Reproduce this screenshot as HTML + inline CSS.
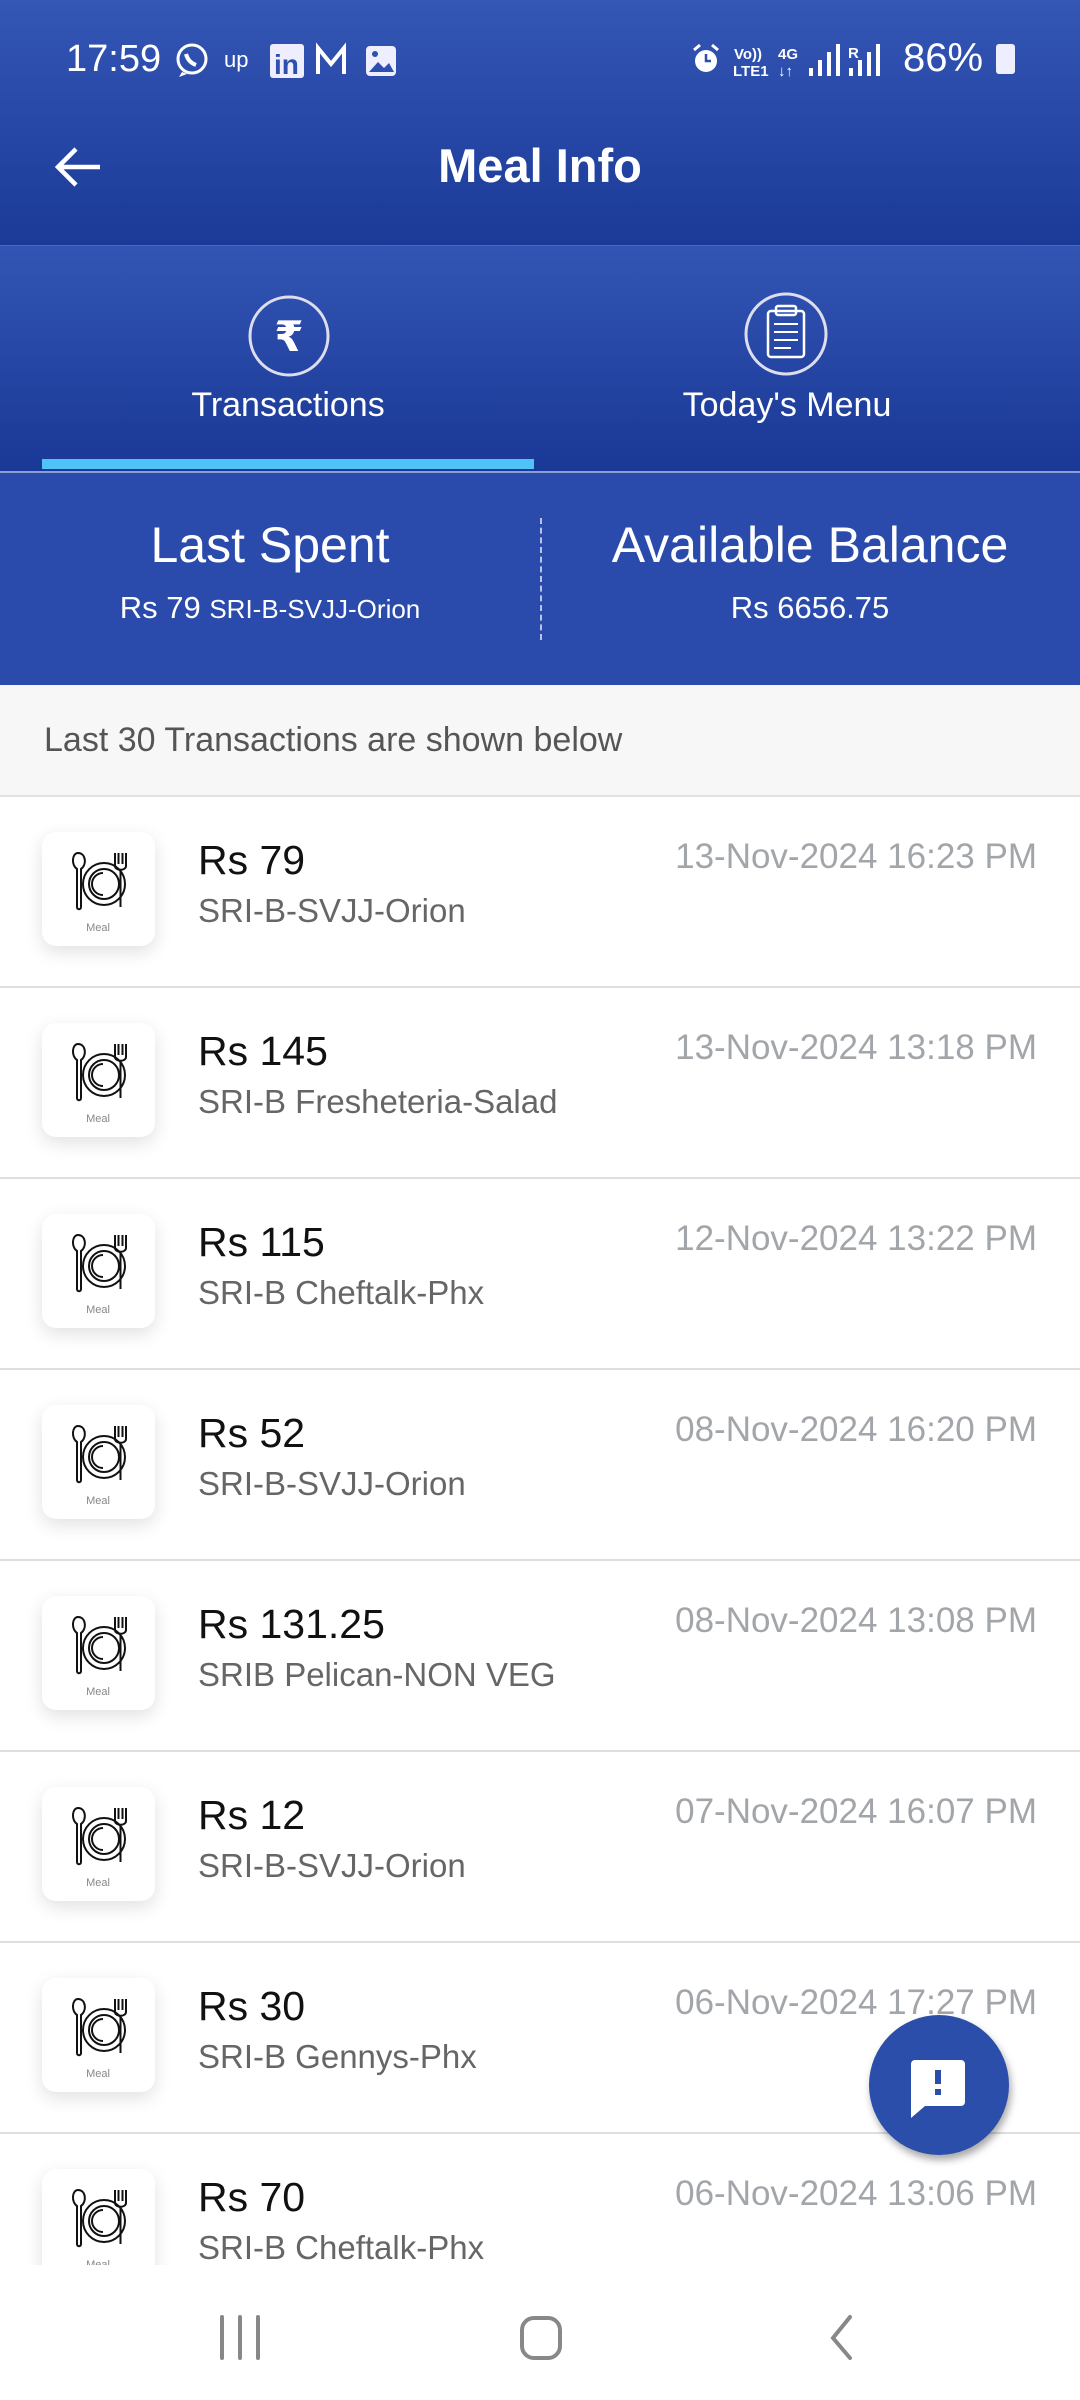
<!DOCTYPE html>
<html><head><meta charset="utf-8">
<style>
*{margin:0;padding:0;box-sizing:border-box}
body{width:1080px;height:2400px;overflow:hidden;background:#fff;font-family:"Liberation Sans",sans-serif;position:relative}
.hdr{position:absolute;left:0;top:0;width:1080px;height:245px;background:linear-gradient(#3456b5,#1b3a98)}
.tabs{position:absolute;left:0;top:245px;width:1080px;height:226px;background:linear-gradient(#3255b4,#1a3896);border-top:1px solid #4a66bf}
.bal{position:absolute;left:0;top:471px;width:1080px;height:214px;background:#2a4bab;border-top:2px solid #8a9ed8}
.abs{position:absolute}
.w{color:#fff}
.note{position:absolute;left:0;top:685px;width:1080px;height:112px;background:#f7f7f7;border-bottom:2px solid #e2e2e2;color:#555;font-size:34px;padding:36px 0 0 44px}
.row{position:absolute;left:0;width:1080px;height:191px;border-bottom:2px solid #dedede}
.card{position:absolute;left:42px;top:35px;width:113px;height:114px;background:#fff;border-radius:14px;box-shadow:0 6px 18px rgba(0,0,0,.12)}
.amt{position:absolute;left:198px;top:40px;font-size:41px;color:#111}
.plc{position:absolute;left:198px;top:95px;font-size:33px;color:#666}
.dt{position:absolute;right:43px;top:40px;font-size:35px;color:#a2a6aa}
</style></head><body>
<div class="hdr"></div>
<div class="abs w" style="left:66px;top:38px;font-size:38px">17:59</div>
<svg class="abs" style="left:174px;top:42px" width="230" height="36" viewBox="0 0 230 36">
<circle cx="18" cy="17" r="14" fill="none" stroke="#fff" stroke-width="3"/><path d="M8 30 L5 35 L13 32" fill="#fff"/><path d="M12 12 q2 8 10 11" stroke="#fff" stroke-width="4" fill="none"/>
<text x="50" y="25" fill="#fff" font-size="22" font-family="Liberation Sans">up</text>
<rect x="96" y="2" width="34" height="34" rx="3" fill="#eef"/><text x="100" y="32" fill="#2d4fae" font-size="28" font-weight="bold" font-family="Liberation Sans">in</text>
<path d="M144 32 V6 L157 22 L170 6 V32" stroke="#fff" stroke-width="4" fill="none"/>
<rect x="192" y="4" width="30" height="30" rx="4" fill="#eef"/><path d="M195 30 L204 20 L210 26 L215 21 L220 30Z" fill="#2d4fae"/><circle cx="201" cy="12" r="3" fill="#2d4fae"/>
</svg>
<svg class="abs" style="left:688px;top:42px" width="330" height="36" viewBox="0 0 330 36">
<circle cx="18" cy="19" r="11" fill="#fff"/><path d="M18 12 V19 H23" stroke="#2d4fae" stroke-width="2.5" fill="none"/><path d="M6 8 L12 3 M30 8 L24 3" stroke="#fff" stroke-width="3"/>
<text x="46" y="17" fill="#fff" font-size="15" font-weight="bold" font-family="Liberation Sans">Vo))</text><text x="45" y="34" fill="#fff" font-size="15" font-weight="bold" font-family="Liberation Sans">LTE1</text>
<text x="90" y="17" fill="#fff" font-size="15" font-weight="bold" font-family="Liberation Sans">4G</text><text x="90" y="34" fill="#fff" font-size="15" font-family="Liberation Sans">↓↑</text>
<rect x="121" y="26" width="4" height="8" fill="#fff"/><rect x="130" y="18" width="4" height="16" fill="#fff"/><rect x="139" y="10" width="4" height="24" fill="#fff"/><rect x="148" y="2" width="4" height="32" fill="#fff"/>
<text x="160" y="16" fill="#fff" font-size="15" font-weight="bold" font-family="Liberation Sans">R</text>
<rect x="161" y="26" width="4" height="8" fill="#fff"/><rect x="170" y="18" width="4" height="16" fill="#fff"/><rect x="179" y="10" width="4" height="24" fill="#fff"/><rect x="188" y="2" width="4" height="32" fill="#fff"/>
</svg>
<div class="abs w" style="left:903px;top:36px;font-size:40px">86%</div>
<div class="abs" style="left:996px;top:44px;width:19px;height:30px;background:#eef;border-radius:3px"></div>
<svg class="abs" style="left:54px;top:145px" width="50" height="44" viewBox="0 0 50 44"><path d="M46 22 H4 M22 4 L4 22 L22 40" stroke="#fff" stroke-width="4.5" fill="none"/></svg>
<div class="abs w" style="left:0;width:1080px;text-align:center;top:138px;font-size:47px;font-weight:bold">Meal Info</div>

<div class="tabs"></div>
<svg class="abs" style="left:247px;top:294px" width="84" height="84"><circle cx="42" cy="42" r="39" fill="none" stroke="#dde" stroke-width="3"/><text x="42" y="57" text-anchor="middle" fill="#fff" font-size="42" font-weight="bold" font-family="DejaVu Sans">₹</text></svg>
<svg class="abs" style="left:743px;top:291px" width="86" height="86"><circle cx="43" cy="43" r="40" fill="none" stroke="#dde" stroke-width="3"/><rect x="25" y="20" width="36" height="46" rx="3" fill="none" stroke="#fff" stroke-width="2.5"/><rect x="33" y="15" width="20" height="9" rx="2" fill="none" stroke="#fff" stroke-width="2.5"/><path d="M31 33 H55 M31 41 H55 M31 49 H55 M31 57 H48" stroke="#fff" stroke-width="2"/></svg>
<div class="abs w" style="left:0;width:576px;text-align:center;top:386px;font-size:34px">Transactions</div>
<div class="abs w" style="left:540px;width:494px;text-align:center;top:386px;font-size:34px">Today's Menu</div>
<div class="abs" style="left:42px;top:459px;width:492px;height:10px;background:#4fc3f7"></div>

<div class="bal"></div>
<div class="abs w" style="left:0;width:540px;text-align:center;top:516px;font-size:50px">Last Spent</div>
<div class="abs w" style="left:0;width:540px;text-align:center;top:590px;font-size:31px">Rs 79 <span style="font-size:26px">SRI-B-SVJJ-Orion</span></div>
<div class="abs" style="left:540px;top:518px;height:122px;border-left:2px dashed #b8c4ea"></div>
<div class="abs w" style="left:540px;width:540px;text-align:center;top:516px;font-size:50px">Available Balance</div>
<div class="abs w" style="left:540px;width:540px;text-align:center;top:590px;font-size:31px">Rs 6656.75</div>

<div class="note">Last 30 Transactions are shown below</div>

<svg width="0" height="0" style="position:absolute"><defs><g id="m"><path d="M36 21 c-6 0 -7 12 -1 16 v38 c0 3 4 3 4 0 v-38 c6 -4 5 -16 -3 -16z" fill="none" stroke="#111" stroke-width="2"/><circle cx="62" cy="52" r="21" fill="none" stroke="#111" stroke-width="2"/><circle cx="62" cy="52" r="15" fill="none" stroke="#111" stroke-width="2"/><path d="M61 41 a11 11 0 0 0 0 22" fill="none" stroke="#111" stroke-width="2"/><path d="M73 21 v13 c0 5 11 5 11 0 v-13 M76.5 21 v11 M80.5 21 v11 M78.5 37 v38" fill="none" stroke="#111" stroke-width="2"/><text x="56" y="99" text-anchor="middle" fill="#888" font-size="11" font-family="Liberation Sans">Meal</text></g></defs></svg>

<div class="row" style="top:797px"><svg class="card" viewBox="0 0 113 114"><use href="#m"/></svg><div class="amt">Rs 79</div><div class="plc">SRI-B-SVJJ-Orion</div><div class="dt">13-Nov-2024 16:23 PM</div></div>
<div class="row" style="top:988px"><svg class="card" viewBox="0 0 113 114"><use href="#m"/></svg><div class="amt">Rs 145</div><div class="plc">SRI-B Fresheteria-Salad</div><div class="dt">13-Nov-2024 13:18 PM</div></div>
<div class="row" style="top:1179px"><svg class="card" viewBox="0 0 113 114"><use href="#m"/></svg><div class="amt">Rs 115</div><div class="plc">SRI-B Cheftalk-Phx</div><div class="dt">12-Nov-2024 13:22 PM</div></div>
<div class="row" style="top:1370px"><svg class="card" viewBox="0 0 113 114"><use href="#m"/></svg><div class="amt">Rs 52</div><div class="plc">SRI-B-SVJJ-Orion</div><div class="dt">08-Nov-2024 16:20 PM</div></div>
<div class="row" style="top:1561px"><svg class="card" viewBox="0 0 113 114"><use href="#m"/></svg><div class="amt">Rs 131.25</div><div class="plc">SRIB Pelican-NON VEG</div><div class="dt">08-Nov-2024 13:08 PM</div></div>
<div class="row" style="top:1752px"><svg class="card" viewBox="0 0 113 114"><use href="#m"/></svg><div class="amt">Rs 12</div><div class="plc">SRI-B-SVJJ-Orion</div><div class="dt">07-Nov-2024 16:07 PM</div></div>
<div class="row" style="top:1943px"><svg class="card" viewBox="0 0 113 114"><use href="#m"/></svg><div class="amt">Rs 30</div><div class="plc">SRI-B Gennys-Phx</div><div class="dt">06-Nov-2024 17:27 PM</div></div>
<div class="row" style="top:2134px;border:none"><svg class="card" viewBox="0 0 113 114"><use href="#m"/></svg><div class="amt">Rs 70</div><div class="plc">SRI-B Cheftalk-Phx</div><div class="dt">06-Nov-2024 13:06 PM</div></div>

<div class="abs" style="left:869px;top:2015px;width:140px;height:140px;border-radius:50%;background:#2b4eaa;box-shadow:2px 5px 8px rgba(0,0,0,.35)"></div>
<svg class="abs" style="left:909px;top:2060px" width="60" height="58" viewBox="0 0 60 58"><path d="M6 0 H52 a4 4 0 0 1 4 4 V42 a4 4 0 0 1 -4 4 H16 L2 58 V4 a4 4 0 0 1 4 -4z" fill="#fff"/><rect x="26" y="10" width="6" height="14" fill="#2b4eaa"/><rect x="26" y="29" width="6" height="6" fill="#2b4eaa"/></svg>

<div class="abs" style="left:0;top:2265px;width:1080px;height:135px;background:#fff"></div>
<svg class="abs" style="left:210px;top:2312px" width="660" height="50" viewBox="0 0 660 50"><path d="M12 5 V46 M30 5 V46 M48 5 V46" stroke="#888" stroke-width="4" stroke-linecap="round"/><rect x="312" y="6" width="38" height="40" rx="12" fill="none" stroke="#888" stroke-width="4"/><path d="M640 5 L623 26 L640 46" stroke="#888" stroke-width="4" fill="none" stroke-linecap="round"/></svg>
</body></html>
